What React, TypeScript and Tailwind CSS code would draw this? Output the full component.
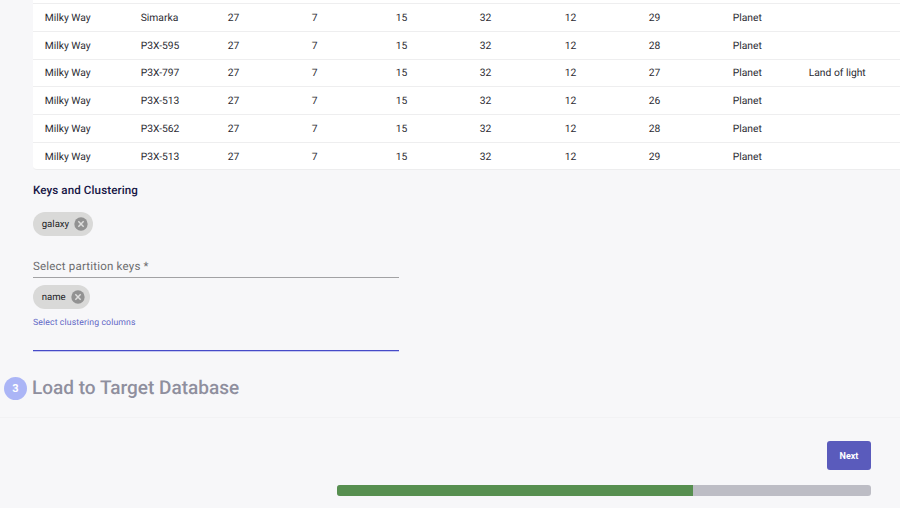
const rows = [
  ['Milky Way', 'Simarka', '27', '7', '15', '32', '12', '29', 'Planet', ''],
  ['Milky Way', 'P3X-595', '27', '7', '15', '32', '12', '28', 'Planet', ''],
  ['Milky Way', 'P3X-797', '27', '7', '15', '32', '12', '27', 'Planet', 'Land of light'],
  ['Milky Way', 'P3X-513', '27', '7', '15', '32', '12', '26', 'Planet', ''],
  ['Milky Way', 'P3X-562', '27', '7', '15', '32', '12', '28', 'Planet', ''],
  ['Milky Way', 'P3X-513', '27', '7', '15', '32', '12', '29', 'Planet', ''],
];

function DataTable() {
  return (
    <div className="ml-[33px] h-[170px] shrink-0 overflow-hidden rounded-bl border-b border-[#ededee] bg-white pt-[3px]">
      {rows.map((row, i) => (
        <div
          key={i}
          className="grid h-[27.8px] grid-cols-[96px_87px_84px_84px_84px_85px_84px_84px_76px_90px] items-center border-t border-[#eeeeef] pt-[1.1px] pl-[11.7px] text-[10.3px] leading-none whitespace-nowrap text-[#2b2b32]"
        >
          {row.map((cell, j) => (
            <span key={j}>{cell}</span>
          ))}
        </div>
      ))}
    </div>
  );
}

function Chip({ label }: { label: string }) {
  return (
    <span className="flex h-[24px] w-fit items-center gap-[4px] rounded-full bg-[#d9d9d8] pr-[4px] pl-[8.7px] text-[9.6px] leading-none text-[#222226]">
      <span className="pt-[1.5px]">{label}</span>
      <svg viewBox="0 0 24 24" className="size-[16px]">
        <circle cx="12" cy="12" r="10" fill="#929292" />
        <path d="M8 8l8 8M16 8l-8 8" stroke="#dededd" strokeWidth="2.2" />
      </svg>
    </span>
  );
}

export default function App() {
  return (
    <div className="flex h-[508px] w-[900px] flex-col overflow-hidden bg-[#f7f7f9] font-[Roboto,'Liberation_Sans',sans-serif] [text-rendering:geometricPrecision]">
      <DataTable />

      <section className="ml-[33px] flex h-[182px] w-[366px] shrink-0 flex-col pt-[13px]">
        <h3 className="text-[11.6px] leading-[14px] font-medium tracking-[0.1px] text-[#161545]">Keys and Clustering</h3>
        <div className="mt-[15px]">
          <Chip label="galaxy" />
        </div>
        <div className="mt-[22px] h-[20px] border-b border-[#a2a2a4] text-[11.5px] leading-[16px] tracking-[0.2px] text-[#6c6c6e]">
          Select partition keys *
        </div>
        <div className="mt-[7px]">
          <Chip label="name" />
        </div>
        <div className="mt-[6px] h-[36px] border-b border-[#464bc8] text-[8.7px] leading-[16px] tracking-[0.12px] text-[#6267c6] shadow-[0_1px_0_#c6c8ef]">
          Select clustering columns
        </div>
      </section>

      <div className="flex h-[66px] shrink-0 items-center gap-[5px] border-b border-[#f2f2f4] pt-[7px] pl-[4px]">
        <span className="flex size-[23px] items-center justify-center rounded-full bg-[#abb5f6] text-[11px] leading-none font-bold text-white">3</span>
        <h2 className="text-[19px] leading-[24px] font-medium text-[#8f8f9e]">Load to Target Database</h2>
      </div>

      <footer className="flex flex-1 flex-col items-end pt-[23px] pr-[29px]">
        <button className="h-[29px] w-[44px] rounded-[3px] bg-[#5a5bbc] pt-px text-[9px] leading-none font-bold text-white">Next</button>
        <div className="mt-[15px] h-[11px] w-[534px] overflow-hidden rounded-[3px] bg-[#bdbdc5]">
          <div className="h-full w-[356px] bg-[#578f50]" />
        </div>
      </footer>
    </div>
  );
}
